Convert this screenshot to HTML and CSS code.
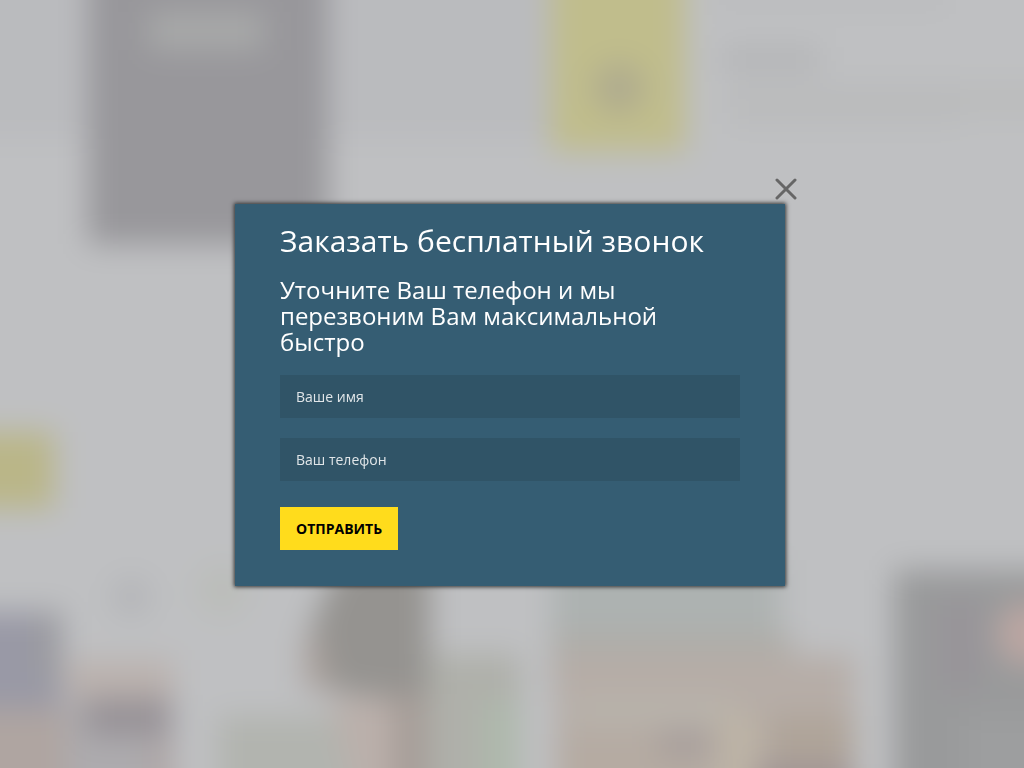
FILE: index.html
```html
<!DOCTYPE html>
<html lang="ru">
<head>
    <meta charset="UTF-8">
    <meta name="viewport" content="width=device-width, initial-scale=1.0">
    <title>Заказать бесплатный звонок</title>
    <link rel="stylesheet" href="styles.css">
</head>
<body>
    <svg class="backdrop" viewBox="0 0 1024 768" preserveAspectRatio="xMidYMid slice" aria-hidden="true">
        <defs>
            <filter id="soft" filterUnits="userSpaceOnUse" x="-80" y="-80" width="1184" height="928" color-interpolation-filters="sRGB">
                <feGaussianBlur stdDeviation="15"/>
            </filter>
        </defs>
        <g filter="url(#soft)">
            <rect x="-80" y="-80" width="1184" height="928" fill="#bfc0c2"/>
            <!-- top banner -->
            <rect x="-80" y="-80" width="630" height="219" fill="#babbbe"/>
            <rect x="88" y="-80" width="240" height="324" fill="#98979b"/>
            <rect x="148" y="12" width="116" height="38" fill="#a8a9a9"/>
            <rect x="551" y="-80" width="134" height="231" fill="#c0bd8c"/>
            <circle cx="619" cy="88" r="26" fill="#b0ac8e"/>
            <rect x="716" y="-10" width="230" height="16" fill="#b9babc"/>
            <rect x="722" y="46" width="98" height="26" fill="#b4b5b7"/>
            <rect x="730" y="84" width="230" height="40" fill="#babbbc"/>
            <rect x="960" y="84" width="140" height="32" fill="#bbbcbc"/>
            <rect x="-80" y="432" width="134" height="76" fill="#bab688"/>
            <!-- icons over the photos -->
            <circle cx="131" cy="597" r="20" fill="#b4b5b8"/>
            <circle cx="222" cy="590" r="26" fill="#bbbdb9"/>
            <!-- photos -->
            <rect x="-80" y="612" width="142" height="96" fill="#9999a6"/>
            <rect x="30" y="612" width="32" height="70" fill="#9a9aa0"/>
            <rect x="-80" y="708" width="146" height="140" fill="#afa5a1"/>
            <rect x="66" y="660" width="108" height="38" fill="#bbb2ae"/>
            <rect x="66" y="698" width="108" height="150" fill="#adabae"/>
            <rect x="86" y="698" width="84" height="38" fill="#979297"/>
            <rect x="150" y="740" width="22" height="108" fill="#aea5a4"/>
            <rect x="218" y="716" width="170" height="132" fill="#b2b4af"/>
            <path d="M340 560H430V700H400L310 688L302 650Z" fill="#959390"/>
            <path d="M304 640L318 630L334 690L304 690Z" fill="#aba29d"/>
            <path d="M330 698H400V848H370Z" fill="#bbb0ab"/>
            <rect x="392" y="694" width="36" height="154" fill="#a69d98"/>
            <rect x="428" y="654" width="92" height="194" fill="#afb0aa"/>
            <rect x="482" y="700" width="36" height="148" fill="#aeb9ac"/>
            <rect x="552" y="560" width="228" height="90" fill="#adb2b1"/>
            <rect x="552" y="632" width="240" height="60" fill="#afada8"/>
            <rect x="556" y="656" width="298" height="192" fill="#b6ada7"/>
            <rect x="574" y="700" width="160" height="20" fill="#b9b5ac"/>
            <rect x="556" y="734" width="150" height="114" fill="#b5aba2"/>
            <rect x="658" y="732" width="54" height="24" fill="#a69d9a"/>
            <rect x="718" y="714" width="40" height="134" fill="#bdb4a6"/>
            <rect x="768" y="716" width="86" height="132" fill="#afa499"/>
            <rect x="756" y="764" width="96" height="84" fill="#9f9494"/>
            <rect x="894" y="570" width="210" height="278" fill="#999a9b"/>
            <rect x="940" y="600" width="40" height="90" fill="#989499"/>
            <circle cx="1028" cy="634" r="32" fill="#bba6a2"/>
            <rect x="964" y="716" width="140" height="132" fill="#9d9e9f"/>
        </g>
    </svg>

    <div class="overlay">
        <div class="modal" role="dialog" aria-labelledby="modal-title">
            <button class="close" type="button" aria-label="Закрыть">
                <svg width="22" height="22" viewBox="0 0 22 22" aria-hidden="true">
                    <path d="M2 2L20 20M20 2L2 20" fill="none" stroke="#666" stroke-width="3" stroke-linecap="round"/>
                </svg>
            </button>
            <h2 id="modal-title">Заказать бесплатный звонок</h2>
            <p>Уточните Ваш телефон и мы перезвоним Вам максимальной быстро</p>
            <form>
                <input type="text" name="name" placeholder="Ваше имя" aria-label="Ваше имя">
                <input type="tel" name="phone" placeholder="Ваш телефон" aria-label="Ваш телефон">
                <button class="submit" type="submit">Отправить</button>
            </form>
        </div>
    </div>
</body>
</html>
```
FILE: styles.css
```css
* {
    box-sizing: border-box;
}
body {
    margin: 0;
    background-color: #bfc0c2;
    color: #fff;
    font-family: "Open Sans", sans-serif;
    font-size: 14px;
}
.backdrop {
    position: fixed;
    top: 0;
    left: 0;
    width: 100%;
    height: 100%;
}
.overlay {
    position: relative;
    display: flex;
    align-items: center;
    justify-content: center;
    min-height: 100vh;
    padding: 22px 4px 0 0;
}
.modal {
    position: relative;
    width: 100%;
    max-width: 550px;
    padding: 20px 45px 36px;
    background-color: #355d73;
    box-shadow: 0 0 4px 1px #333;
}
.modal h2 {
    margin: 0 0 19px;
    font-size: 30px;
    font-weight: 400;
    line-height: 34px;
}
.modal p {
    margin: 0 0 20px;
    font-size: 24px;
    line-height: 26px;
}
form {
    display: flex;
    flex-direction: column;
    align-items: flex-start;
    gap: 20px;
}
input {
    width: 100%;
    height: 43px;
    padding: 0 16px;
    border: 0;
    border-radius: 0;
    background-color: #305467;
    color: #fff;
    font: inherit;
}
input::placeholder {
    color: #fff;
    opacity: 0.85;
}
.submit {
    height: 43px;
    margin-top: 6px;
    padding: 0 16px;
    border: 0;
    background-color: #ffdc1c;
    color: #000;
    font: inherit;
    font-weight: 700;
    text-transform: uppercase;
    cursor: pointer;
}
.submit:hover {
    background-color: #ffe34a;
}
.close {
    position: absolute;
    top: -26px;
    right: -12px;
    padding: 0;
    border: 0;
    background: none;
    cursor: pointer;
}
.close svg {
    display: block;
}
```
